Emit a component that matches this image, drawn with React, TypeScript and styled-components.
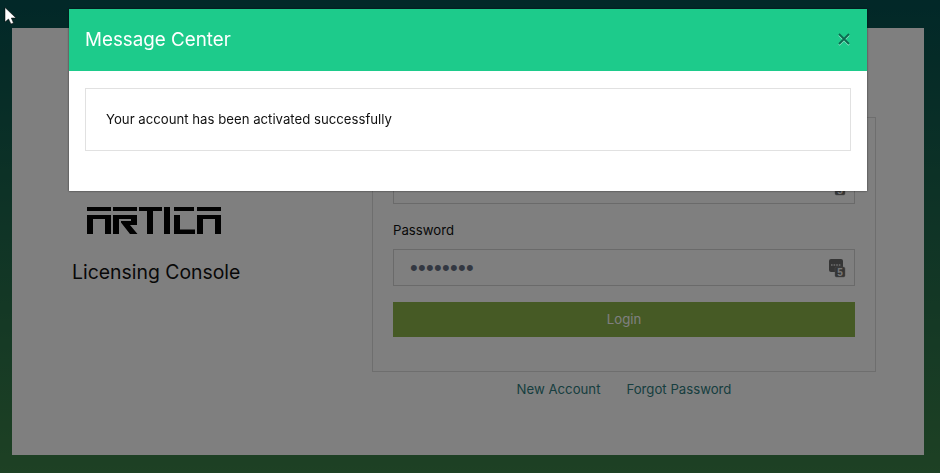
import styled, { createGlobalStyle } from 'styled-components';

const GlobalStyle = createGlobalStyle`
    html, body {
        margin: 0;
        padding: 0;
        height: 473px;
        overflow: hidden;
    }
    body {
        font-family: Inter, "Liberation Sans", sans-serif;
        color: #111;
    }
`;

const Page = styled.div`
    box-sizing: border-box;
    height: 473px;
    padding: 28px 16px 18px 12px;
    display: flex;
    background: linear-gradient(180deg, #045050 0%, #3c8248 100%);
`;

const Card = styled.main`
    flex: 1;
    background: #fff;
    display: grid;
    grid-template-columns: 360px 504px;
    align-content: start;
    padding-top: 89px;
`;

const Brand = styled.section`
    padding: 90px 0 0 60px;
    display: flex;
    flex-direction: column;
    align-items: flex-start;
`;

const Logo = styled.svg`
    display: block;
    margin-left: 15px;
`;

const ConsoleTitle = styled.h1`
    margin: 25px 0 0;
    font-size: 19.4px;
    line-height: 24px;
    font-weight: 400;
`;

const LoginColumn = styled.section`
    display: flex;
    flex-direction: column;
`;

const FormBox = styled.form`
    box-sizing: border-box;
    height: 255px;
    border: 1px solid #ddd;
    padding: 20px 20px 0;
    display: flex;
    flex-direction: column;
    gap: 16px;
`;

const Field = styled.div`
    display: flex;
    flex-direction: column;
    gap: 9px;
`;

const Label = styled.label`
    font-size: 13.2px;
    line-height: 20px;
`;

const InputWrap = styled.div`
    position: relative;
`;

const Input = styled.input`
    box-sizing: border-box;
    display: block;
    width: 100%;
    height: 37px;
    padding: 0 40px 0 16px;
    border: 1px solid #d4d4d4;
    border-radius: 0;
    background: #fff;
    color: #667084;
    font-family: "Liberation Sans", sans-serif;
    font-size: 22px;
    letter-spacing: 0.3px;
    outline: none;
`;

const KeyBadge = styled.svg`
    position: absolute;
    top: 9px;
    right: 8px;
`;

const LoginButton = styled.button`
    height: 35px;
    padding: 0 0 1px;
    border: none;
    background: #8cb44a;
    color: #fff;
    font-family: inherit;
    font-size: 13.2px;
`;

const LinkRow = styled.nav`
    display: flex;
    justify-content: center;
    gap: 26px;
    margin-top: 7px;
`;

const FooterLink = styled.a`
    font-size: 13.2px;
    line-height: 20px;
    color: #2f7d80;
    text-decoration: none;
`;

const Backdrop = styled.div`
    position: fixed;
    inset: 0;
    background: rgba(0, 0, 0, 0.5);
`;

const Modal = styled.div`
    position: fixed;
    top: 9px;
    left: 69px;
    width: 798px;
    height: 182px;
    background: #fff;
    box-shadow: 0 0 2px rgba(0, 0, 0, 0.6);
`;

const ModalHeader = styled.header`
    box-sizing: border-box;
    height: 62px;
    padding: 0 17px 2px 16px;
    display: flex;
    align-items: center;
    justify-content: space-between;
    background: #1dcb8b;
`;

const ModalTitle = styled.h2`
    margin: 0;
    font-size: 18.8px;
    font-weight: 400;
    color: #fff;
`;

const CloseIcon = styled.svg`
    filter: drop-shadow(0 1px 0 rgba(255, 255, 255, 0.5));
`;

const ModalBody = styled.div`
    padding: 17px 16px;
`;

const Message = styled.p`
    margin: 0;
    padding: 20px 20px 20px;
    border: 1px solid #e1e1e1;
    font-size: 13.2px;
    line-height: 21px;
`;

const Cursor = styled.svg`
    position: fixed;
    top: 7px;
    left: 4px;
`;

const PasswordBadge = () => (
    <KeyBadge width="20" height="20" viewBox="0 0 20 20">
        <rect x="2" y="1" width="14" height="13" rx="2" fill="#6a6a6a" />
        <path d="M4 7h1.6M6.6 7h1.6M9.2 7h1.6M11.8 7h1.6" stroke="#ddd" strokeWidth="1.4" />
        <rect x="8" y="9" width="10" height="10" rx="1.5" fill="#6a6a6a" stroke="#999" strokeWidth="0.5" />
        <text x="13" y="17.5" fontSize="10" fontWeight="700" fill="#eee" textAnchor="middle" fontFamily="Liberation Sans">
            5
        </text>
    </KeyBadge>
);

const App = () => {
    return (
        <>
            <GlobalStyle />
            <Page>
                <Card>
                    <Brand>
                        <Logo width="135" height="28" viewBox="0 0 135 28" aria-label="ARTICA">
                            <path
                                fill="#050505"
                                d="M0 0h24v4H0zM0 8h24v19h-6V12H6v15H0zM26 0h24v4H26zM26 8h24v10h-7l7.500 9h-7.500L34 15.500V14h10v-2H32v15h-6zM52 0h23v4H52zM60 4h6v23h-6zM77 0h6v27h-6zM87 0h20v4H87zM87 8h6v14.500h15V27H87zM110 0h24v4h-24zM110 8h24v19h-6V12h-12v15h-6z"
                            />
                        </Logo>
                        <ConsoleTitle>Licensing Console</ConsoleTitle>
                    </Brand>
                    <LoginColumn>
                        <FormBox>
                            <Field>
                                <Label>Username</Label>
                                <InputWrap>
                                    <Input type="text" readOnly />
                                    <PasswordBadge />
                                </InputWrap>
                            </Field>
                            <Field>
                                <Label>Password</Label>
                                <InputWrap>
                                    <Input type="password" value="password" readOnly />
                                    <PasswordBadge />
                                </InputWrap>
                            </Field>
                            <LoginButton type="button">Login</LoginButton>
                        </FormBox>
                        <LinkRow>
                            <FooterLink href="#">New Account</FooterLink>
                            <FooterLink href="#">Forgot Password</FooterLink>
                        </LinkRow>
                    </LoginColumn>
                </Card>
            </Page>
            <Backdrop />
            <Modal>
                <ModalHeader>
                    <ModalTitle>Message Center</ModalTitle>
                    <CloseIcon width="12" height="12" viewBox="0 0 12 12">
                        <path d="M1 1l10 10M11 1L1 11" stroke="#0c6a50" strokeWidth="1.8" />
                    </CloseIcon>
                </ModalHeader>
                <ModalBody>
                    <Message>Your account has been activated successfully</Message>
                </ModalBody>
            </Modal>
            <Cursor width="16" height="20" viewBox="0 0 16 20">
                <path d="M1 0.500V15L4.500 12L7 17L9.500 16L7.300 11H12Z" fill="#fff" stroke="#000" strokeWidth="0.5" />
            </Cursor>
        </>
    );
};

export default App;
